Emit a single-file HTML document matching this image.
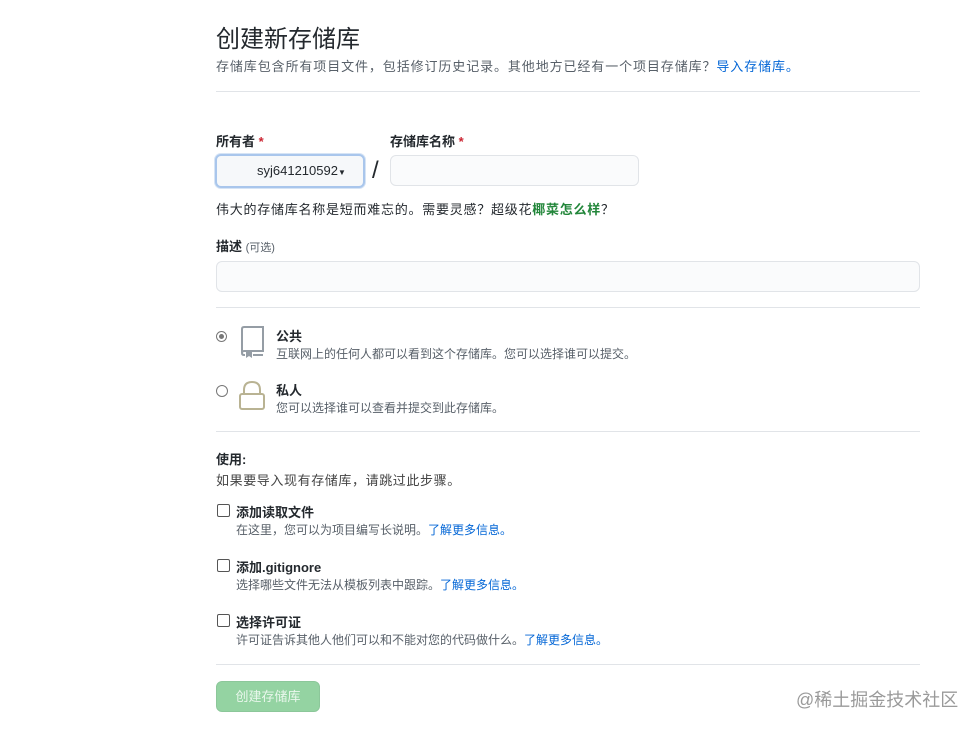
<!DOCTYPE html>
<html><head><meta charset="utf-8"><style>
body{margin:0;background:#fff;font-family:"Liberation Sans","Noto Sans CJK SC",sans-serif;color:#24292e;width:978px;height:730px;position:relative;overflow:hidden}
.a{position:absolute;white-space:nowrap}
.s{font-size:12px;color:#586069}
.b{font-size:13px;font-weight:bold;color:#24292e}
.hr{position:absolute;left:216px;width:704px;height:1px;background:#e1e4e8}
.lnk{color:#0366d6}
.st{color:#cb2431}
.cb{position:absolute;left:217px;width:11px;height:11px;border:1px solid #555;border-radius:2px;background:#fff}
</style></head><body>
<div class="a" style="left:216px;top:19px;font-size:24px;color:#24292e">创建新存储库</div>
<div class="a" style="left:216px;top:56px;font-size:13px;letter-spacing:0.9px;color:#586069">存储库包含所有项目文件，包括修订历史记录。其他地方已经有一个项目存储库？<span class="lnk">导入存储库。</span></div>
<div class="hr" style="top:91px"></div>
<div class="a b" style="left:216px;top:131px">所有者 <span class="st">*</span></div>
<div class="a b" style="left:390px;top:131px">存储库名称 <span class="st">*</span></div>
<div class="a" style="left:215px;top:154px;width:150px;height:34px;border:2px solid #a9c6ec;border-radius:6px;background:#f6f8fa;box-sizing:border-box;box-shadow:0 0 0 1px #d6e4f5"></div>
<div class="a" style="left:257px;top:163px;font-size:13px">syj641210592<span style="font-size:8px">▼</span></div>
<div class="a" style="left:372px;top:157px;font-size:24px">/</div>
<div class="a" style="left:390px;top:155px;width:249px;height:31px;border:1px solid #e1e4e8;border-radius:6px;background:#fafbfc;box-sizing:border-box"></div>
<div class="a" style="left:216px;top:199px;font-size:13px;letter-spacing:0.75px">伟大的存储库名称是短而难忘的。需要灵感？超级花<b style="color:#22863a">椰菜怎么样</b>？</div>
<div class="a b" style="left:216px;top:236px">描述 <span style="font-size:11px;font-weight:normal;color:#586069">(可选)</span></div>
<div class="a" style="left:216px;top:261px;width:704px;height:31px;border:1px solid #e1e4e8;border-radius:6px;background:#fafbfc;box-sizing:border-box"></div>
<div class="hr" style="top:307px"></div>
<div class="a" style="left:216px;top:331px;width:11px;height:11px;border:1px solid #777;border-radius:50%;box-sizing:border-box;background:#fff"><div style="margin:2px;width:5px;height:5px;border-radius:50%;background:#777"></div></div>
<svg class="a" style="left:239px;top:326px" width="27" height="33" viewBox="0 0 27 33"><path d="M3 27V3Q3 1 5 1H24V25H5Q3 25 3 27Q3 29 5 29H6M14 29H24" fill="none" stroke="#959da5" stroke-width="2"/><path d="M7 26H13V32L10 30L7 32Z" fill="#959da5"/></svg>
<div class="a b" style="left:276px;top:326px">公共</div>
<div class="a s" style="left:276px;top:345px">互联网上的任何人都可以看到这个存储库。您可以选择谁可以提交。</div>
<div class="a" style="left:216px;top:385px;width:12px;height:12px;border:1px solid #777;border-radius:50%;box-sizing:border-box;background:#fff"></div>
<svg class="a" style="left:238px;top:380px" width="28" height="31" viewBox="0 0 28 31"><path d="M6 14V10Q6 2 14 2Q22 2 22 10V14" fill="none" stroke="#b9b393" stroke-width="2"/><rect x="2" y="14" width="24" height="15" rx="2" fill="none" stroke="#b9b393" stroke-width="2"/></svg>
<div class="a b" style="left:276px;top:380px">私人</div>
<div class="a s" style="left:276px;top:399px">您可以选择谁可以查看并提交到此存储库。</div>
<div class="hr" style="top:431px"></div>
<div class="a b" style="left:216px;top:449px">使用:</div>
<div class="a" style="left:216px;top:470px;font-size:13px;letter-spacing:0.6px;color:#444">如果要导入现有存储库，请跳过此步骤。</div>
<div class="cb" style="top:504px"></div>
<div class="a b" style="left:236px;top:502px">添加读取文件</div>
<div class="a s" style="left:236px;top:521px">在这里，您可以为项目编写长说明。<span class="lnk">了解更多信息。</span></div>
<div class="cb" style="top:559px"></div>
<div class="a b" style="left:236px;top:557px">添加.gitignore</div>
<div class="a s" style="left:236px;top:576px">选择哪些文件无法从模板列表中跟踪。<span class="lnk">了解更多信息。</span></div>
<div class="cb" style="top:614px"></div>
<div class="a b" style="left:236px;top:612px">选择许可证</div>
<div class="a s" style="left:236px;top:631px">许可证告诉其他人他们可以和不能对您的代码做什么。<span class="lnk">了解更多信息。</span></div>
<div class="hr" style="top:664px"></div>
<div class="a" style="left:216px;top:681px;width:104px;height:31px;border-radius:6px;background:#94d3a2;border:1px solid #8cc79a;box-sizing:border-box;color:#e9f7ec;font-size:13px;text-align:center;line-height:29px">创建存储库</div>
<div class="a" style="left:796px;top:686px;font-size:18px;color:#9a9a9a">@稀土掘金技术社区</div>
</body></html>
